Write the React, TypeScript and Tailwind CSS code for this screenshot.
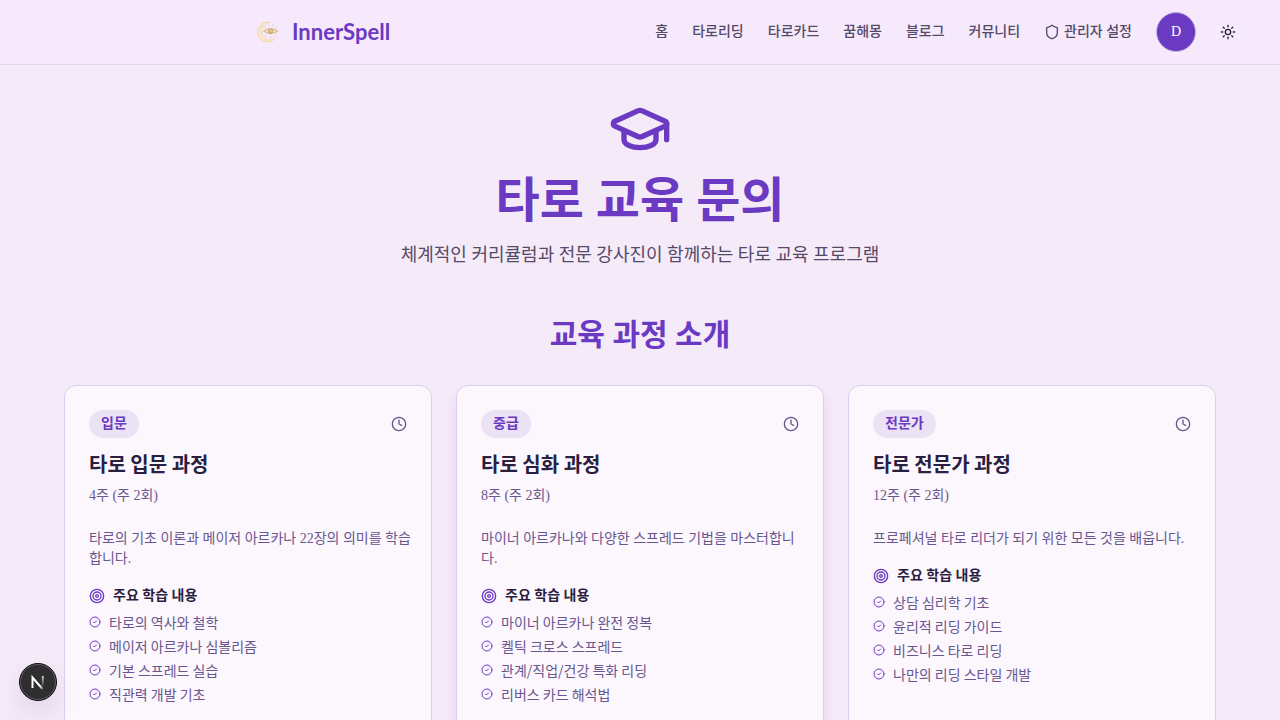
import { CircleCheck, Clock, GraduationCap, Shield, Sun, Target } from "lucide-react";

type Course = {
  level: string;
  title: string;
  duration: string;
  description: string;
  topics: string[];
  raised?: boolean;
};

const links = ["홈", "타로리딩", "타로카드", "꿈해몽", "블로그", "커뮤니티"];

const courses: Course[] = [
  {
    level: "입문",
    title: "타로 입문 과정",
    duration: "4주 (주 2회)",
    description: "타로의 기초 이론과 메이저 아르카나 22장의 의미를 학습합니다.",
    topics: ["타로의 역사와 철학", "메이저 아르카나 심볼리즘", "기본 스프레드 실습", "직관력 개발 기초"],
  },
  {
    level: "중급",
    title: "타로 심화 과정",
    duration: "8주 (주 2회)",
    description: "마이너 아르카나와 다양한 스프레드 기법을 마스터합니다.",
    topics: ["마이너 아르카나 완전 정복", "켈틱 크로스 스프레드", "관계/직업/건강 특화 리딩", "리버스 카드 해석법"],
    raised: true,
  },
  {
    level: "전문가",
    title: "타로 전문가 과정",
    duration: "12주 (주 2회)",
    description: "프로페셔널 타로 리더가 되기 위한 모든 것을 배웁니다.",
    topics: ["상담 심리학 기초", "윤리적 리딩 가이드", "비즈니스 타로 리딩", "나만의 리딩 스타일 개발"],
  },
];

function MoonLogo() {
  return (
    <svg viewBox="0 0 24 24" className="size-6" aria-hidden="true">
      <path d="M14.500 2.500A10 10 0 1 0 19 18.600 8.800 8.800 0 1 1 14.500 2.500Z" fill="#f8e6c6" stroke="#efd7a8" strokeWidth=".8" />
      <path d="M7.800 11.300Q14.500 6 21.500 11.300Q14.500 16 7.800 11.300Z" fill="#f3e2d4" stroke="#d8b988" strokeWidth="1.200" />
      <circle cx="14.600" cy="11.200" r="2.500" fill="#cdaa80" />
      <circle cx="14.600" cy="10.800" r="1" fill="#f7e3b8" />
      <path d="M9.500 7.500l-1-1.300M12.500 6.200l-.4-1.700M16.500 6.200l.5-1.700M19.500 7.700l1.200-1.300M10 15.500l-.8 1.300M14.500 16.500v2M19 15.500l.9 1.200" stroke="#e2cacb" strokeWidth="1" />
    </svg>
  );
}

function NextMark() {
  return (
    <svg viewBox="0 0 38 38" className="size-[38px]" aria-hidden="true">
      <defs>
        <linearGradient id="diagonal" x1="13" y1="13" x2="25" y2="27" gradientUnits="userSpaceOnUse">
          <stop offset=".7" stopColor="#fff" />
          <stop offset="1" stopColor="#fff" stopOpacity="0.1" />
        </linearGradient>
        <linearGradient id="stem" x1="24" y1="13" x2="24" y2="23" gradientUnits="userSpaceOnUse">
          <stop stopColor="#fff" stopOpacity=".8" />
          <stop offset="1" stopColor="#fff" stopOpacity="0.1" />
        </linearGradient>
      </defs>
      <circle cx="19" cy="19" r="18.500" fill="#2f2d2f" stroke="#0c0c0c" />
      <circle cx="19" cy="19" r="17.500" fill="none" stroke="#5c5a5c" />
      <path d="M13.500 25V14.500L23.500 26" fill="none" stroke="url(#diagonal)" strokeWidth="2" />
      <path d="M23.800 13v10" stroke="url(#stem)" strokeWidth="1.800" />
    </svg>
  );
}

function CourseCard({ course }: { course: Course }) {
  return (
    <article
      className={`rounded-xl border border-[#dcd0f0] bg-[#fbf7fd] p-6 pb-12 ${
        course.raised ? "shadow-[0_10px_15px_-3px_rgba(70,40,120,0.16)]" : ""
      }`}
    >
      <div className="mb-3 flex items-center justify-between">
        <span className="flex h-7 items-center rounded-full bg-[#ebe3f5] px-3 text-sm leading-5 font-bold text-[#6b3ac2]">
          {course.level}
        </span>
        <Clock className="size-4 text-[#69568f]" />
      </div>
      <h3 className="font-['Noto_Sans_CJK_KR',sans-serif] text-xl leading-7 font-bold text-[#29203f]">{course.title}</h3>
      <p className="mt-2 text-sm leading-5">{course.duration}</p>
      <p className="mt-[23px] -mr-2 text-sm leading-5">{course.description}</p>
      <h4 className="mt-[15px] mb-1 flex items-center gap-2 text-sm leading-6 font-bold text-[#29203f]">
        <Target className="size-4 text-[#6b3ac2]" />
        주요 학습 내용
      </h4>
      <ul className="space-y-1 font-['Noto_Sans_CJK_KR',sans-serif] text-sm leading-5">
        {course.topics.map((topic) => (
          <li key={topic} className="flex items-center gap-2">
            <CircleCheck className="size-3 shrink-0 text-[#6b3ac2]" />
            {topic}
          </li>
        ))}
      </ul>
    </article>
  );
}

export default function App() {
  return (
    <div className="min-h-screen bg-[#f5eaf8] font-['Liberation_Serif','Noto_Sans_CJK_KR',serif] text-[#69568f]">
      <header className="border-b border-[#e0d7ee] bg-[#f5e9fb]">
        <div className="flex h-16 items-center justify-between pr-8 pl-64">
          <a
            href="#home"
            className="flex items-center gap-3 font-['Lato',sans-serif] text-[22px] leading-8 font-bold text-[#6b3ac2]"
          >
            <MoonLogo />
            InnerSpell
          </a>
          <div className="flex items-center gap-3">
            <nav className="flex items-center gap-6 text-sm leading-5 font-medium text-[#544969]">
              {links.map((link) => (
                <a key={link} href={`#${link}`}>
                  {link}
                </a>
              ))}
              <a href="#admin" className="flex items-center gap-1">
                <Shield className="size-4" />
                관리자 설정
              </a>
              <button type="button" className="size-10 rounded-full border border-[#c3aee6] bg-[#6b3ac2] text-sm text-white">
                D
              </button>
            </nav>
            <button type="button" aria-label="테마 변경" className="flex size-10 items-center justify-center text-[#29203f]">
              <Sun className="size-4" />
            </button>
          </div>
        </div>
      </header>

      <main className="px-16 py-8">
        <section className="mb-12 flex flex-col items-center text-center">
          <GraduationCap className="mb-4 size-16 text-[#6b3ac2]" />
          <h1 className="mb-4 text-5xl leading-none font-bold text-[#6b3ac2]">타로 교육 문의</h1>
          <p className="text-lg leading-7 text-[#544969]">체계적인 커리큘럼과 전문 강사진이 함께하는 타로 교육 프로그램</p>
        </section>
        <section>
          <h2 className="mb-8 text-center text-3xl leading-9 font-bold text-[#6b3ac2]">교육 과정 소개</h2>
          <div className="grid grid-cols-3 gap-6">
            {courses.map((course) => (
              <CourseCard key={course.level} course={course} />
            ))}
          </div>
        </section>
      </main>

      <button
        type="button"
        aria-label="개발 도구"
        className="fixed bottom-[19px] left-[19px] rounded-full shadow-[0_12px_24px_rgba(70,50,100,0.1)]"
      >
        <NextMark />
      </button>
    </div>
  );
}
